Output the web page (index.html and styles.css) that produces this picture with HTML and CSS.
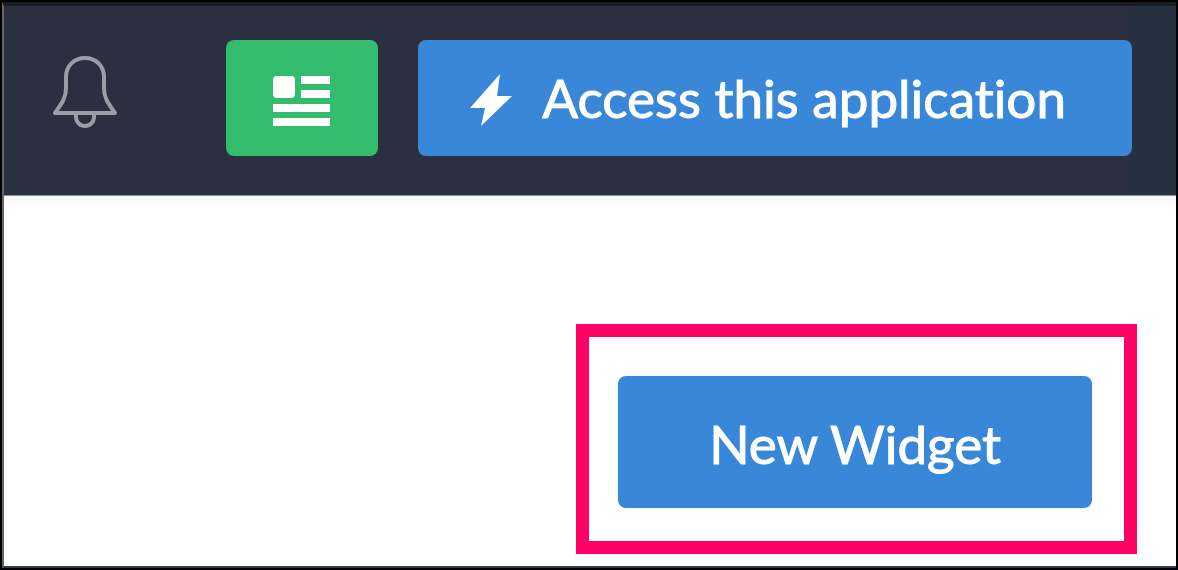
FILE: index.html
```html
<!DOCTYPE html>
<html lang="en">
  <head>
    <meta charset="utf-8" />
    <title>Widgets</title>
    <link rel="stylesheet" href="styles.css">
  </head>
  <body>
    <div class="window">
      <header class="topbar">
        <button class="bell" type="button" aria-label="Notifications">
          <svg width="66" height="76" viewBox="0 0 66 76" fill="none" stroke="#9a9da6" stroke-width="4" stroke-linejoin="round">
            <path d="M33 4C22 4 14 12 14 23V34C14 45 9 50 3 59H63C57 50 52 45 52 34V23C52 12 44 4 33 4Z" />
            <path d="M24 60V63C24 68 28 72 33 72S42 68 42 63V60" />
          </svg>
        </button>
        <button class="btn btn-news" type="button" aria-label="News">
          <svg width="58" height="50" viewBox="0 0 58 50" fill="#fff">
            <rect width="22" height="22" rx="4" />
            <rect x="28" width="29" height="8" />
            <rect x="28" y="14" width="29" height="8" />
            <rect y="28" width="57" height="8" />
            <rect y="42" width="57" height="8" />
          </svg>
        </button>
        <button class="btn btn-access" type="button">
          <svg width="42" height="58" viewBox="0 0 42 58" fill="#fff">
            <path d="M30 5L0 39H15L11 57L42 27H27Z" />
          </svg>
          <span>Access this application</span>
        </button>
      </header>
      <main class="content">
        <div class="highlight">
          <button class="btn btn-new" type="button">New Widget</button>
        </div>
      </main>
    </div>
  </body>
</html>
```
FILE: styles.css
```css
* {
  box-sizing: border-box;
}

body {
  display: flex;
  min-height: 100vh;
  margin: 0;
  border: 2px solid #000;
  font-family: Lato, sans-serif;
}

.window {
  flex: 1;
  display: flex;
  flex-direction: column;
  border: solid #666;
  border-width: 4px 0 2px 2px;
  border-top-color: #171e24;
  border-bottom-color: #2a3d58;
  background: #fff;
}

.topbar {
  display: flex;
  justify-content: flex-end;
  align-items: center;
  gap: 40px;
  padding: 34px 44px 39px 48px;
  border-bottom: 1px solid #8a8d97;
  background: linear-gradient(to left, #25313f 44px, #2a3040 44px);
}

.bell {
  display: flex;
  margin-right: auto;
  padding: 0 0 12px;
  border: 0;
  background: none;
  cursor: pointer;
}

.btn {
  display: flex;
  justify-content: center;
  align-items: center;
  border: 0;
  border-radius: 8px;
  background: #3987d9;
  color: #fff;
  font-family: inherit;
  font-size: 53px;
  font-variant-ligatures: none;
  line-height: 60px;
  -webkit-text-stroke: 1px #fff;
  cursor: pointer;
}

.btn-news {
  padding: 36px 47px 30px;
  background: #34bc6e;
}

.btn-access {
  gap: 30px;
  padding: 28px 66px 28px 52px;
}

.content {
  flex: 1;
  display: flex;
  justify-content: flex-end;
  align-items: flex-start;
  padding: 128px 39px 12px;
  background: linear-gradient(#f7f7f8, #fff 12px);
}

.highlight {
  padding: 39px 32px 33px 29px;
  border: 13px solid #ff0065;
}

.btn-new {
  padding: 38px 91px 34px;
}
```
